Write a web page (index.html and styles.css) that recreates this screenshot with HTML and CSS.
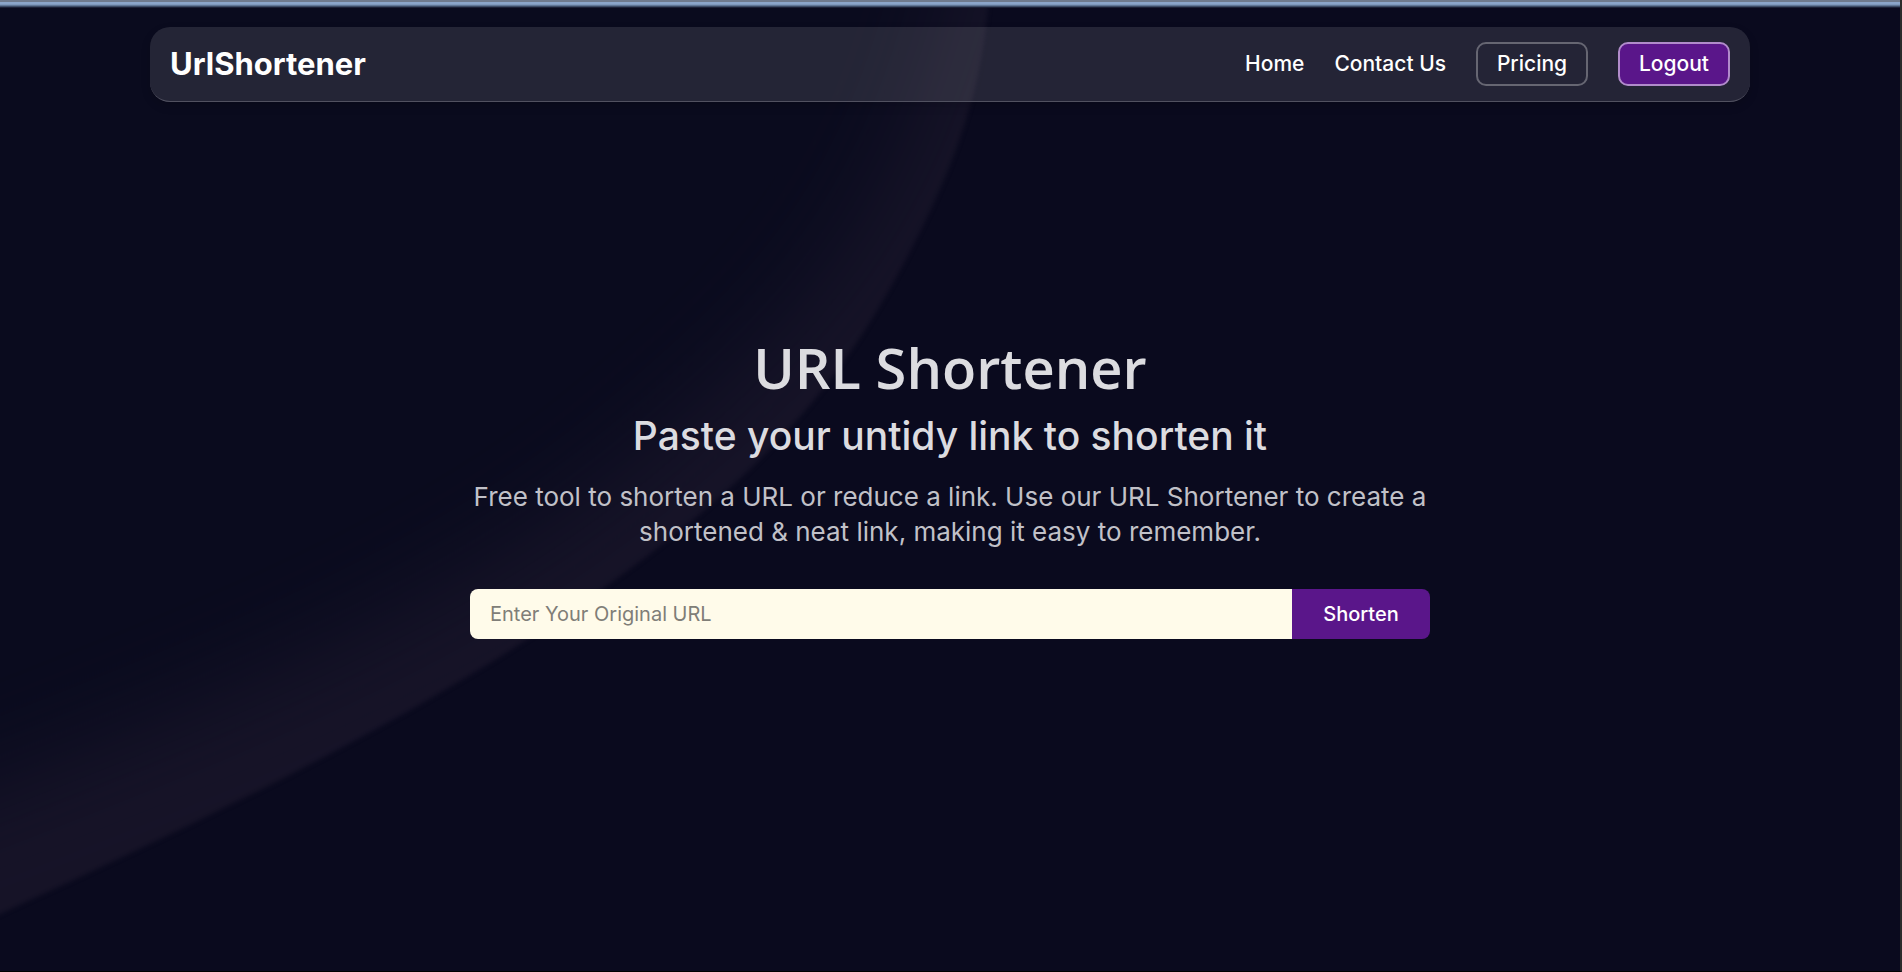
FILE: index.html
```html
<!DOCTYPE html>
<html lang="en">
<head>
<meta charset="utf-8">
<meta name="viewport" content="width=device-width, initial-scale=1">
<title>UrlShortener</title>
<link rel="stylesheet" href="styles.css">
</head>
<body>
<div class="page">
  <svg class="backdrop" viewBox="0 0 1900 970" preserveAspectRatio="none" aria-hidden="true">
    <defs>
      <clipPath id="arc"><path d="M-40 -40V931L0 913C230 808 430 710 600 590S840 380 900 270S980 90 989 0V-40Z"/></clipPath>
      <filter id="soft" x="-30%" y="-30%" width="160%" height="160%" color-interpolation-filters="sRGB"><feGaussianBlur stdDeviation="50"/></filter>
      <filter id="edge" color-interpolation-filters="sRGB"><feGaussianBlur stdDeviation="2"/></filter>
    </defs>
    <g filter="url(#edge)">
      <g clip-path="url(#arc)">
        <rect x="-40" y="-40" width="1140" height="1020" fill="#171428"/>
        <path d="M-300 -300V900C100 740 420 640 640 455S940 180 1010 -300Z" fill="#0a0b1e" filter="url(#soft)"/>
      </g>
    </g>
  </svg>
  <div class="topbar"></div>
  <header class="header">
    <a class="logo" href="#">UrlShortener</a>
    <nav class="nav">
      <a class="link" href="#">Home</a>
      <a class="link" href="#">Contact Us</a>
      <a class="link outlined" href="#">Pricing</a>
      <button class="link outlined filled" type="button">Logout</button>
    </nav>
  </header>
  <main class="hero">
    <h1 class="title">URL Shortener</h1>
    <h2 class="subtitle">Paste your untidy link to shorten it</h2>
    <p class="text">Free tool to shorten a URL or reduce a link. Use our URL Shortener to create a shortened &amp; neat link, making it easy to remember.</p>
    <form class="form">
      <input class="field" type="url" placeholder="Enter Your Original URL" aria-label="Original URL">
      <button class="submit" type="button">Shorten</button>
    </form>
  </main>
</div>
</body>
</html>
```
FILE: styles.css
```css
* { box-sizing: border-box; margin: 0; }

body {
  background: #0a0a1e;
  color: #fff;
  font-family: Inter, "Open Sans", sans-serif;
}

.page {
  position: relative;
  display: flex;
  flex-direction: column;
  min-height: 100vh;
  overflow: hidden;
  border-right: 2px solid #2b2b2b;
  border-bottom: 1px solid #000;
}

.backdrop {
  position: absolute;
  inset: 0;
  width: 100%;
  height: 100%;
}

.topbar {
  position: relative;
  height: 8px;
  background: linear-gradient(#6f7a8d 0 2px, #8ba5c9 2px 4px, #7f99bd 4px 5px, #617796 5px 6px, #3d4c67 6px 7px, #1b2036 7px);
}

.header {
  position: relative;
  display: flex;
  align-items: center;
  justify-content: space-between;
  width: calc(100% - 40px);
  max-width: 1600px;
  margin: 19px auto 0;
  padding: 15px 20px;
  border-bottom: 1px solid #515160;
  border-radius: 20px;
  background: rgba(255, 255, 255, 0.11);
  box-shadow: 0 4px 10px rgba(0, 0, 0, 0.15);
}

.logo {
  color: #fff;
  font-size: 31px;
  font-weight: 700;
  line-height: 36px;
  text-decoration: none;
}

.nav {
  display: flex;
  align-items: center;
  gap: 30px;
}

.link {
  color: #fff;
  font: 500 21px/24px Inter, "Open Sans", sans-serif;
  text-align: center;
  text-decoration: none;
  white-space: nowrap;
}

.outlined {
  min-width: 112px;
  padding: 8px 16px;
  border: 2px solid rgba(255, 255, 255, 0.3);
  border-radius: 10px;
}

.filled {
  border-color: #b18bcb;
  background: #5a168a;
}

.hero {
  position: relative;
  width: calc(100% - 40px);
  max-width: 960px;
  margin: 231px auto 40px;
  text-align: center;
}

.title {
  color: #dcdce0;
  font: 600 56px/68px "Open Sans", sans-serif;
}

.subtitle {
  margin-top: 10px;
  color: #dcdce0;
  font-size: 39px;
  font-weight: 500;
  line-height: 50px;
}

.text {
  margin-top: 18px;
  color: #c1c1c8;
  font-size: 26px;
  line-height: 35px;
}

.form {
  display: flex;
  margin-top: 40px;
}

.field {
  flex: 1;
  min-width: 0;
  height: 50px;
  padding: 0 20px;
  border: 0;
  border-radius: 8px 0 0 8px;
  background: #fffbea;
  color: #222;
  font: 400 20px/24px Inter, "Open Sans", sans-serif;
}

.field::placeholder { color: #807e78; opacity: 1; }

.submit {
  width: 138px;
  border: 0;
  border-radius: 0 8px 8px 0;
  background: #5a168a;
  color: #fff;
  font: 500 20px/24px Inter, "Open Sans", sans-serif;
}
```
